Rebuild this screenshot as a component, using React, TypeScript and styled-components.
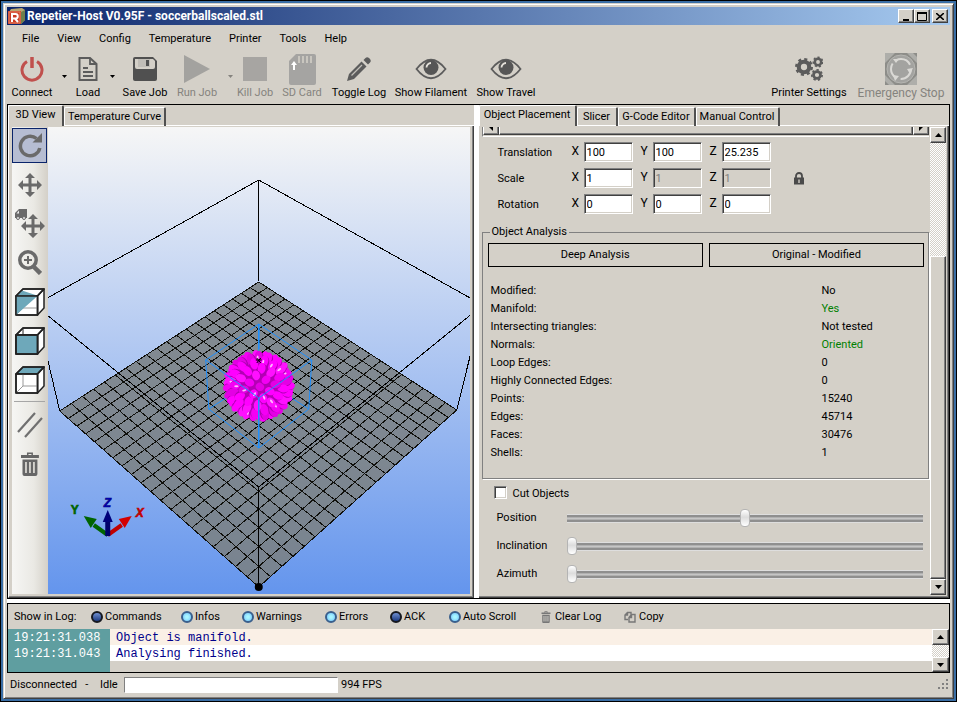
import React from 'react';
import styled, { createGlobalStyle, css } from 'styled-components';

const face = '#d4d0c8';
const uiFont = 'Roboto, "Liberation Sans", sans-serif';

const GlobalStyle = createGlobalStyle`
  * { box-sizing: border-box; }
  body { margin: 0; background: #000; font: 11px/14px ${uiFont}; color: #000; }
  button, input { font: inherit; color: inherit; margin: 0; }
  button { padding: 0; background: none; border: 0; }
  svg { display: block; flex: none; }
`;

const raised = css`
  background: ${face};
  border: 1px solid;
  border-color: #fff #404040 #404040 #fff;
  box-shadow: inset -1px -1px #808080;
`;

/* ---------- window ---------- */

const Desktop = styled.div`
  min-height: 100vh;
  display: flex;
  border: 1px solid #000;
  padding: 2px;
  background: #3a6ea5;
`;
const Frame = styled.div`
  flex: 1;
  min-width: 0;
  display: flex;
  flex-direction: column;
  padding: 3px;
  background: ${face};
  border: 1px solid;
  border-color: ${face} #404040 #404040 ${face};
  box-shadow: inset 1px 1px #fff, inset -1px -1px #808080;
`;
const TitleBar = styled.header`
  height: 18px;
  display: flex;
  align-items: center;
  padding: 0 2px 0 1px;
  background: linear-gradient(90deg, #0a246a, #a6caf0);
`;
const Title = styled.h1`
  flex: 1;
  margin: 0 0 0 2px;
  font-size: 12px;
  line-height: 18px;
  font-weight: 700;
  color: #fff;
  white-space: nowrap;
`;
const CaptionButton = styled.button<{ $apart?: boolean }>`
  ${raised}
  width: 16px;
  height: 14px;
  display: grid;
  place-items: center;
  margin-left: ${p => (p.$apart ? 2 : 0)}px;
`;
const MenuBar = styled.nav`
  height: 25px;
  display: flex;
  align-items: center;
  gap: 18px;
  padding: 2px 15px 0;
`;
const MenuItem = styled.button`
  white-space: nowrap;
  line-height: 23px;
`;

/* ---------- toolbar ---------- */

const Toolbar = styled.div`
  height: 54px;
  display: flex;
  padding-left: 1px;
`;
const Tool = styled.button<{ $w: number; $big?: boolean }>`
  flex: none;
  width: ${p => p.$w}px;
  display: flex;
  flex-direction: column;
  align-items: center;
  justify-content: flex-start;
  padding-top: 2px;
  white-space: nowrap;
  font-size: ${p => (p.$big ? 12 : 11)}px;
  &:disabled { color: #85837e; }
`;
const ToolIcon = styled.span`
  height: 34px;
  display: grid;
  place-items: center;
`;
const Drop = styled.button<{ $w: number }>`
  width: ${p => p.$w}px;
  display: flex;
  justify-content: center;
  padding-top: 25px;
  &:disabled { color: #85837e; }
`;
const Spacer = styled.div`
  flex: 1;
`;

/* ---------- work area ---------- */

const Main = styled.main`
  flex: 1 1 auto;
  display: flex;
  border: 1px solid #000;
`;
const Splitter = styled.div`
  flex: none;
  width: 5px;
  background: #fff;
`;
const Pane = styled.section<{ $grow: number }>`
  flex: ${p => p.$grow} 1 0;
  min-width: 0;
  display: flex;
  flex-direction: column;
`;
const TabStrip = styled.div`
  height: 21px;
  display: flex;
  align-items: flex-end;
`;
const Tab = styled.button<{ $w: number; $active?: boolean }>`
  width: ${p => p.$w}px;
  height: ${p => (p.$active ? 21 : 19)}px;
  padding-bottom: ${p => (p.$active ? 2 : 0)}px;
  border: 0 solid #fff;
  border-width: 1px 0 0 1px;
  border-right: 2px solid #505050;
  border-radius: 2px 2px 0 0;
  box-shadow: ${p => (p.$active ? 'none' : 'inset 0 -1px #fff')};
  white-space: nowrap;
`;
const TabRest = styled.div`
  flex: 1;
  border-bottom: 1px solid #fff;
`;
const TabPage = styled.div`
  flex: 1;
  min-height: 0;
  display: flex;
  padding: 1px 3px 3px;
  border-right: 1px solid #404040;
  border-bottom: 1px solid #404040;
  border-left: 1px solid #fff;
  box-shadow: inset -1px -1px #808080;
`;
const SideTools = styled.div`
  flex: none;
  width: 36px;
  padding-top: 1px;
  background: linear-gradient(90deg, #f6f6f4, #eae9e4 60%, #d4d0c8);
`;
const SideTool = styled.button<{ $on?: boolean }>`
  width: 35px;
  height: 35px;
  margin-bottom: 4px;
  display: grid;
  place-items: center;
  border: 1px solid ${p => (p.$on ? '#0a246a' : 'transparent')};
  background: ${p => (p.$on ? '#b6bdd2' : 'none')};
`;
const SideRule = styled.hr`
  margin: 2px 3px 5px 2px;
  border: 0;
  border-top: 1px solid #a6a6a6;
`;
const Canvas = styled.div`
  flex: 1;
  min-width: 0;
  background: linear-gradient(#f6f6f6, #6495ed);
  overflow: hidden;
`;

/* ---------- object placement ---------- */

const PlacementPage = styled.div`
  flex: 1;
  min-height: 0;
  display: flex;
  padding: 1px 2px 2px 3px;
  border-right: 1px solid #404040;
  border-bottom: 1px solid #404040;
  box-shadow: inset -1px -1px #808080;
`;
const Form = styled.div`
  flex: 1;
  min-width: 0;
  display: flex;
  flex-direction: column;
  padding-right: 1px;
`;
const HScroll = styled.div`
  height: 10px;
  display: flex;
  border-left: 1px solid #808080;
  border-bottom: 1px solid #fff;
`;
const HScrollPart = styled.div<{ $grow?: boolean }>`
  flex: ${p => (p.$grow ? '1' : '0 0 16px')};
  height: 8px;
  overflow: hidden;
  display: flex;
  justify-content: center;
  border: 1px solid;
  border-color: transparent #404040 #404040 #fff;
  border-top: 0;
  box-shadow: inset -1px -1px #808080;
`;
const Vectors = styled.div`
  display: grid;
  grid-template-columns: 74px repeat(3, 12px 57px) 1fr;
  grid-auto-rows: 20px;
  row-gap: 6px;
  align-items: center;
  padding: 5px 0 0 16px;
`;
const VectorName = styled.span`
  padding-top: 2px;
`;
const Axis = styled.label`
  padding-bottom: 2px;
  font-size: 12px;
`;
const NumberBox = styled.input`
  width: 49px;
  height: 20px;
  padding: 1px 2px 0;
  border: 1px solid;
  border-color: #808080 #fff #fff #808080;
  box-shadow: inset 1px 1px #404040, inset -1px -1px ${face};
  border-radius: 0;
  background: #fff;
  font-size: 11px;
  &:disabled { background: ${face}; color: #808080; }
`;
const Lock = styled.button`
  justify-self: start;
  margin-left: 15px;
`;
const Analysis = styled.fieldset`
  margin: 11px 0 0;
  min-width: 0;
  padding: 4px 4px 16px 5px;
  border: 1px solid #808080;
  box-shadow: 1px 1px #fff;
`;
const Legend = styled.legend`
  margin-left: 2px;
  padding: 0 2px;
`;
const ButtonRow = styled.div`
  display: grid;
  grid-template-columns: 1fr 1fr;
  gap: 6px;
  margin-bottom: 15px;
`;
const FlatButton = styled.button`
  height: 24px;
  border: 1px solid #000;
`;
const Facts = styled.dl`
  display: grid;
  grid-template-columns: 331px 1fr;
  line-height: 18px;
  margin: 0;
  padding-left: 3px;
`;
const Fact = styled.dt``;
const Value = styled.dd<{ $good?: boolean }>`
  margin: 0;
  color: ${p => (p.$good ? '#008000' : '#000')};
`;
const CutRow = styled.label`
  display: flex;
  align-items: center;
  gap: 6px;
  height: 18px;
  margin: 6px 0 0 12px;
`;
const Tick = styled.input`
  appearance: none;
  width: 13px;
  height: 13px;
  margin-bottom: 3px;
  border: 1px solid;
  border-color: #808080 #fff #fff #808080;
  box-shadow: inset 1px 1px #404040, inset -1px -1px ${face};
  background: #fff;
`;
const Sliders = styled.div`
  display: grid;
  grid-template-columns: 70px 1fr;
  grid-auto-rows: 28px;
  align-items: center;
  padding: 1px 6px 0 15px;
`;
const Range = styled.input`
  appearance: none;
  width: 100%;
  min-width: 0;
  height: 18px;
  background: linear-gradient(#dedede 0 1px, #8f8f8f 1px 3px, #b0b0b0 3px 4px, #c6c6c6 4px 5px, #b0b0b0 5px 6px, #8f8f8f 6px 8px, #dedede 8px) center / 100% 9px no-repeat;
  &::-webkit-slider-thumb {
    appearance: none;
    width: 10px;
    height: 18px;
    border: 1px solid #b4b4b4;
    border-radius: 4px;
    background: linear-gradient(#fff, #dcdcdc 45%, #fff);
  }
`;
const VScroll = styled.div<{ $w: number }>`
  flex: none;
  width: ${p => p.$w}px;
  display: flex;
  flex-direction: column;
  background: repeating-conic-gradient(#fff 0 25%, ${face} 0 50%) 0 0 / 2px 2px;
`;
const ScrollButton = styled.button<{ $h: number }>`
  ${raised}
  height: ${p => p.$h}px;
  display: grid;
  place-items: center;
`;
const ScrollGap = styled.div<{ $grow: number }>`
  flex: ${p => p.$grow} 1 0;
`;
const ScrollThumb = styled.div<{ $grow: number }>`
  ${raised}
  flex: ${p => p.$grow} 1 0;
`;

/* ---------- log ---------- */

const LogPanel = styled.section`
  margin-top: 4px;
  box-shadow: 0 -4px #fff;
  border: 1px solid #000;
  height: 70px;
  display: flex;
  flex-direction: column;
`;
const LogTools = styled.div`
  height: 25px;
  display: flex;
  align-items: center;
  padding-left: 6px;
`;
const LogCaption = styled.span`
  width: 77px;
  white-space: nowrap;
`;
const LogTool = styled.button<{ $w: number; $gap?: number }>`
  flex: none;
  width: ${p => p.$w}px;
  display: flex;
  align-items: center;
  gap: ${p => p.$gap ?? 2}px;
  white-space: nowrap;
`;
const Led = styled.span<{ $on?: boolean }>`
  width: 12px;
  height: 12px;
  border: 2px solid ${p => (p.$on ? '#3a5f8c' : '#15181f')};
  border-radius: 50%;
  background: ${p => (p.$on
    ? 'radial-gradient(circle, #a9f6ff 20%, #6fc0ff)'
    : 'linear-gradient(#6f8fd0, #1c3a80)')};
`;
const LogBody = styled.div`
  flex: 1;
  display: flex;
`;
const LogTable = styled.div`
  flex: 1;
  display: grid;
  grid-template-columns: 102px 1fr;
  grid-template-rows: 16px 16px 1fr;
  font: 12px/16px "Liberation Mono", monospace;
`;
const Stamp = styled.span`
  background: #5f9ea0;
  color: #fff;
  padding: 1px 0 0 6px;
`;
const Message = styled.span<{ $bg: string }>`
  background: ${p => p.$bg};
  color: #00008b;
  padding: 1px 0 0 6px;
`;
const StatusBar = styled.footer`
  height: 22px;
  display: flex;
  align-items: center;
  padding: 2px 0 0 3px;
`;
const StatusText = styled.span<{ $w: number }>`
  width: ${p => p.$w}px;
  white-space: pre;
`;
const Progress = styled.div`
  width: 214px;
  height: 16px;
  margin-right: 3px;
  background: #fff;
  border: 1px solid;
  border-color: #808080 #fff #fff #808080;
`;

/* ---------- icons ---------- */

const G = '#5c5c5c';
const Arrow = ({ up }: { up?: boolean }) => (
  <svg width="7" height="4" fill="currentColor"><path d={up ? 'M0 4L3.5 0L7 4z' : 'M0 0H7L3.5 4z'} /></svg>
);
const DropArrow = () => (
  <svg width="5" height="3" fill="currentColor"><path d="M0 0H5L2.5 3z" /></svg>
);
const AppIcon = () => (
  <svg width="17" height="16">
    <path d="M3 1L14 0L17 2V12L13 16V4H1z" fill="#b9a772" />
    <path d="M13 4L17 2V12L13 16z" fill="#6d7f4c" />
    <rect x="0" y="3" width="13" height="13" fill="#c93a22" />
    <rect x="1" y="4" width="11" height="11" fill="none" stroke="#e88868" />
    <path d="M4 14V6H7.500a2.200 2.200 0 0 1 0 4.500H4M7 10.500L10 14" fill="none" stroke="#fff" strokeWidth="2" />
  </svg>
);
const Power = () => (
  <svg width="24" height="26" fill="none" stroke="#c0504d" strokeWidth="3">
    <path d="M7 5.500A10 10 0 1 0 17 5.500" /><path d="M12 1V12" strokeWidth="3.500" />
  </svg>
);
const Doc = () => (
  <svg width="20" height="26" fill="none" stroke={G} strokeWidth="2">
    <path d="M1.500 2H12L18.500 8V24H1.500z" /><path d="M12 2V8H18M5 12H10M5 16H15M5 20H15" strokeWidth="1.800" />
  </svg>
);
const Floppy = () => (
  <svg width="24" height="24">
    <path d="M2 0H20L24 4V22a2 2 0 0 1-2 2H2a2 2 0 0 1-2-2V2a2 2 0 0 1 2-2z" fill="#505050" />
    <path d="M2 2H20L22 4V10a2 2 0 0 1-2 2H4a2 2 0 0 1-2-2z" fill="#d4d0c8" />
    <rect x="5" y="2" width="12" height="8" fill="#c0bdb7" /><rect x="13" y="3" width="3" height="6" fill="#505050" />
  </svg>
);
const Play = () => (<svg width="26" height="28" fill="#a3a29f"><path d="M0 0L26 14L0 28z" /></svg>);
const Stop = () => (<svg width="24" height="24"><rect width="24" height="24" fill="#a7a5a2" /></svg>);
const SdCard = () => (
  <svg width="27" height="31">
    <path d="M7 0H25a2 2 0 0 1 2 2V29a2 2 0 0 1-2 2H2a2 2 0 0 1-2-2V7z" fill="#a5a4a2" />
    <path d="M10 2V9M14 2V9M18 2V9M22 2V9" stroke="#c9c6bf" strokeWidth="2" />
    <path d="M5 16V9" stroke="#fff" strokeWidth="2" /><path d="M2 11L5 7L8 11z" fill="#fff" />
  </svg>
);
const Pencil = () => (
  <svg width="24" height="24" fill={G}>
    <path d="M0 24L2 17L14.500 4.500L19.500 9.500L7 22z" /><path d="M16.500 3L18.500 1Q20-.500 22 1L23 2Q24.500 4 23 5.500L21 7.500z" />
    <path d="M4.500 18.500L15 8" stroke="#c2bfb9" strokeWidth="1.200" />
  </svg>
);
const Eye = () => (
  <svg width="32" height="22">
    <path d="M1.500 11Q16-7.500 30.500 11Q16 29.500 1.500 11z" fill="none" stroke={G} strokeWidth="1.800" />
    <circle cx="16" cy="9.500" r="7.500" fill="#565656" />
    <path d="M11.500 9.500A4.500 4.500 0 0 1 16 5" fill="none" stroke="#e4e1da" strokeWidth="1.800" />
  </svg>
);
const gear = (cx: number, cy: number, r: number, t: number) => (
  <g stroke={G} fill="none">
    <circle cx={cx} cy={cy} r={r * 0.58} strokeWidth={r * 0.46} />
    <circle cx={cx} cy={cy} r={r * 0.86} strokeWidth={r * 0.28} strokeDasharray={`${(r * 0.86 * Math.PI) / t} ${(r * 0.86 * Math.PI) / t}`} />
  </g>
);
const Gears = () => (<svg width="28" height="26">{gear(9, 11, 9, 8)}{gear(23, 6, 5.5, 7)}{gear(22, 19, 6, 7)}</svg>);
const Emergency = () => (
  <svg width="32" height="32">
    <rect width="32" height="32" fill="#8d8d89" />
    <path d="M0 10L10 0H0zM22 0L32 10V4L28 0zM0 22L10 32H4L0 28zM32 22L22 32H32z" fill="#aeaeaa" />
    <circle cx="16" cy="16" r="14" fill="#a3a3a0" stroke="#b5b5b1" />
    <circle cx="16" cy="16" r="10" fill="none" stroke="#dad9d5" strokeWidth="2" strokeDasharray="16 5" />
    <path d="M8 6H14L11 10zM28 15L25 21L22 16zM8 22L14 23L10 28z" fill="#dad9d5" />
  </svg>
);
const Rotate = () => (
  <svg width="24" height="25" fill="none" stroke="#6a6a6a" strokeWidth="3.500">
    <path d="M18.500 5.500A9.800 9.800 0 1 0 21.800 15" /><path d="M24 0V9.500H14.500z" fill="#6a6a6a" stroke="none" />
  </svg>
);
const crossPath = 'M12 0L17 5H13.500V10.500H19V7L24 12L19 17V13.500H13.500V19H17L12 24L7 19H10.500V13.500H5V17L0 12L5 7V10.500H10.500V5H7z';
const Move = () => (<svg width="24" height="24" fill="#6a6a6a"><path d={crossPath} /></svg>);
const MoveObject = () => (
  <svg width="30" height="29" fill="#6a6a6a">
    <path d={crossPath} transform="translate(6 5)" />
    <path d="M4 0H12V9H0V4z" /><path d="M1.500 4.500L4 1.500V4.500z" fill="#eee" />
    <circle cx="3" cy="9" r="1.500" fill="#eee" stroke="#6a6a6a" /><circle cx="9" cy="9" r="1.500" fill="#eee" stroke="#6a6a6a" />
  </svg>
);
const ZoomIcon = () => (
  <svg width="24" height="25" fill="none" stroke="#6a6a6a">
    <circle cx="10" cy="10" r="8.200" strokeWidth="3.500" /><path d="M16 17L22.500 23.500" strokeWidth="4.500" />
    <path d="M10 6V14M6 10H14" strokeWidth="2" />
  </svg>
);
const Cube = ({ kind }: { kind: 'half' | 'front' | 'top' }) => (
  <svg width="30" height="28" stroke="#222" strokeWidth="1.500" strokeLinejoin="round">
    <path d="M1 8L8 1H29L22.500 8z" fill={kind === 'top' ? '#6ea8ba' : '#fff'} />
    <path d="M22.500 8L29 1V20L22.500 27z" fill="#fff" /><rect x="1" y="8" width="21.500" height="19" fill="#fff" />
    {kind !== 'front' && <path d="M8 8V20L1 27M8 20H22" fill="none" stroke="#999" strokeWidth="1" />}
    {kind === 'half' && <path d="M1 8H22.500L1 27zM7 2.500L22 7.500H2z" fill="#6ea8ba" stroke="none" />}
    {kind === 'front' && <rect x="1" y="8" width="21.500" height="19" fill="#6ea8ba" />}
    {kind === 'front' && <path d="M8 1V7" strokeWidth="1" />}
    <path d="M1 8H22.500V27H1zM1 8L8 1H29L22.500 8" fill="none" />
  </svg>
);
const Parallel = () => (
  <svg width="26" height="26" stroke="#707070" strokeWidth="2.200"><path d="M1 20L18 1M8 25L25 6" /></svg>
);
const Trash = ({ size = 24, color = '#666' }: { size?: number; color?: string }) => (
  <svg width={size * 0.83} height={size} viewBox="0 0 20 24" fill={color}>
    <path d="M7 3V0.500H13V3H19V6H1V3zM8.500 3H11.500V2H8.500zM2.500 7.500H17.500V22Q17.500 24 15.500 24H4.500Q2.500 24 2.500 22z" />
    <path d="M6 10V21M10 10V21M14 10V21" stroke="#d8d6d0" strokeWidth="1.800" />
  </svg>
);
const CopyIcon = () => (
  <svg width="12" height="12" fill="none" stroke="#777" strokeWidth="1.400">
    <path d="M4 8.500H1V4L3.500 1.500H7V4M3.500 1.500V4H1M5 6.500L7.500 3.500H11V11H5zM7.500 3.500V6.500H5" />
  </svg>
);
const LockIcon = () => (
  <svg width="10" height="13">
    <path d="M2 6V4a3 3 0 0 1 6 0V6" fill="none" stroke="#4a4a4a" strokeWidth="1.800" />
    <rect x="0" y="5.500" width="10" height="7" fill="#4a4a4a" /><path d="M5 7.500V11" stroke="#c8c5be" strokeWidth="1.500" />
  </svg>
);

/* ---------- 3D scene ---------- */

type Pt = [number, number];
const back: Pt = [211, 155];
const right: Pt = [409, 283];
const front: Pt = [211, 460];
const left: Pt = [12, 284];

// Maps the unit square of the print bed onto its projected corners.
const bed = (() => {
  const dx1 = right[0] - front[0], dx2 = left[0] - front[0], dx3 = back[0] - right[0] + front[0] - left[0];
  const dy1 = right[1] - front[1], dy2 = left[1] - front[1], dy3 = back[1] - right[1] + front[1] - left[1];
  const det = dx1 * dy2 - dx2 * dy1;
  const g = (dx3 * dy2 - dx2 * dy3) / det;
  const h = (dx1 * dy3 - dx3 * dy1) / det;
  const a = right[0] - back[0] + g * right[0], b = left[0] - back[0] + h * left[0];
  const d = right[1] - back[1] + g * right[1], e = left[1] - back[1] + h * left[1];
  return (u: number, v: number) => {
    const w = g * u + h * v + 1;
    return `${((a * u + b * v + back[0]) / w).toFixed(1)} ${((d * u + e * v + back[1]) / w).toFixed(1)}`;
  };
})();
const gridPath = Array.from({ length: 21 }, (_, i) => i / 20)
  .map(t => `M${bed(t, 0)}L${bed(t, 1)}M${bed(0, t)}L${bed(1, t)}`)
  .join('');

// Blunt spikes spread evenly over a sphere, nearest ones drawn last.
const spikes = Array.from({ length: 110 }, (_, i) => {
  const y = 1 - (i + 0.5) / 55;
  const ring = Math.sqrt(1 - y * y);
  const t = i * 2.39996;
  const x = ring * Math.cos(t);
  const z = ring * Math.sin(t);
  return { x, y, z, a: (Math.atan2(y, x) * 180) / Math.PI, r: Math.hypot(x, y), i };
}).filter(p => p.z > -0.4).sort((p, q) => p.z - q.z);
const shades = ['#ff00ff', '#f400f4', '#ff00ff', '#e400e4', '#ff10ff'];

const Scene = () => (
  <svg width="100%" height="100%" viewBox="0 0 422 467" preserveAspectRatio="xMidYMid slice">
    <path d={`M${back}L${right}L${front}L${left}z`} fill="#7b8183" fillOpacity="0.88" />
    <path d={gridPath} fill="none" stroke="#10100c" strokeWidth="1" shapeRendering="crispEdges" />
    <path
      d="M211 53L-13 178L12 284M211 53L435 178L409 283M211 53V154M-13 178L211 360L435 178M211 360V460"
      fill="none" stroke="#000" shapeRendering="crispEdges"
    />
    <path d="M211 197L158 233L161 282L211 321L261 282L264 233zM161 282L211 250L261 282M211 197V250" fill="none" stroke="#1e90ff" />
    <circle cx="211" cy="259" r="27" fill="#b400b4" />
    {spikes.map(p => (
      <g key={p.i} transform={`translate(${(211 + p.x * 30).toFixed(1)} ${(259 + p.y * 30).toFixed(1)}) rotate(${p.a.toFixed(0)})`}>
        <ellipse cx={-p.r} cy="0.800" rx={4.4 + p.r * 2} ry="4.300" fill="#b000b4" />
        <ellipse rx={4.2 + p.r * 2} ry="3.900" fill={shades[p.i % 5]} />
        {p.i % 4 === 0 && <ellipse cx={-p.r} cy="-1" rx="2.200" ry="1" fill="#ffb8ff" />}
      </g>
    ))}
    <path d="M209 231L213 236M213 231L209 236M208 233H214" stroke="#000" />
    <path d="M158 233L211 271L264 233" fill="none" stroke="#1e90ff" strokeWidth="1" />
    <path d="M211 271V321M211 197V222" stroke="#1e90ff" strokeWidth="1.500" />
    <circle cx="211" cy="460" r="4" />
    <g strokeWidth="4">
      <path d="M60 408L46 398" stroke="#006400" /><path d="M36 389L49 392L43 401z" fill="#006400" />
      <path d="M60 408L74 398" stroke="#c00000" /><path d="M84 389L71 392L77 401z" fill="#d40000" />
      <path d="M60 409V394" stroke="#00006a" strokeWidth="5" /><path d="M60 383L65 395H55z" fill="#00007a" />
    </g>
    <g fontFamily="Liberation Sans, sans-serif" fontSize="12" fontWeight="700" strokeWidth="0.600">
      <text x="23" y="387" fill="#006400" stroke="#006400">Y</text>
      <text x="56" y="380" fill="#0000c0" stroke="#00007a" fontStyle="italic">Z</text>
      <text x="88" y="390" fill="#c00000" stroke="#c00000" fontStyle="italic">X</text>
    </g>
  </svg>
);

/* ---------- data ---------- */

const facts: [string, string, boolean?][] = [
  ['Modified:', 'No'],
  ['Manifold:', 'Yes', true],
  ['Intersecting triangles:', 'Not tested'],
  ['Normals:', 'Oriented', true],
  ['Loop Edges:', '0'],
  ['Highly Connected Edges:', '0'],
  ['Points:', '15240'],
  ['Edges:', '45714'],
  ['Faces:', '30476'],
  ['Shells:', '1'],
];
const vectors: { name: string; values: string[]; locked?: boolean }[] = [
  { name: 'Translation', values: ['100', '100', '25.235'] },
  { name: 'Scale', values: ['1', '1', '1'], locked: true },
  { name: 'Rotation', values: ['0', '0', '0'] },
];
const logFilters: [string, number, boolean][] = [
  ['Commands', 90, false],
  ['Infos', 61, true],
  ['Warnings', 83, true],
  ['Errors', 65, true],
  ['ACK', 59, false],
  ['Auto Scroll', 92, true],
];

export default function App() {
  return (
    <Desktop>
      <GlobalStyle />
      <Frame>
        <TitleBar>
          <AppIcon />
          <Title>Repetier-Host V0.95F - soccerballscaled.stl</Title>
          <CaptionButton aria-label="Minimize"><svg width="10" height="9"><path d="M2 8H8" stroke="#000" strokeWidth="2" /></svg></CaptionButton>
          <CaptionButton aria-label="Maximize"><svg width="10" height="9"><path d="M.500 1H9.500M.500 1V8.500H9.500V1" fill="none" stroke="#000" /><path d="M0 1H10" stroke="#000" strokeWidth="2" /></svg></CaptionButton>
          <CaptionButton aria-label="Close" $apart><svg width="8" height="7"><path d="M0 0L8 7M8 0L0 7" stroke="#000" strokeWidth="1.600" /></svg></CaptionButton>
        </TitleBar>
        <MenuBar>
          {['File', 'View', 'Config', 'Temperature', 'Printer', 'Tools', 'Help'].map(m => <MenuItem key={m}>{m}</MenuItem>)}
        </MenuBar>
        <Toolbar>
          <Tool $w={48}><ToolIcon><Power /></ToolIcon>Connect</Tool>
          <Drop $w={16} aria-label="Connect options"><DropArrow /></Drop>
          <Tool $w={32}><ToolIcon><Doc /></ToolIcon>Load</Tool>
          <Drop $w={16} aria-label="Load options"><DropArrow /></Drop>
          <Tool $w={50}><ToolIcon><Floppy /></ToolIcon>Save Job</Tool>
          <Tool $w={54} disabled><ToolIcon><Play /></ToolIcon>Run Job</Tool>
          <Drop $w={12} disabled aria-label="Run options"><DropArrow /></Drop>
          <Tool $w={38} disabled><ToolIcon><Stop /></ToolIcon>Kill Job</Tool>
          <Tool $w={56} disabled><ToolIcon><SdCard /></ToolIcon>SD Card</Tool>
          <Tool $w={58}><ToolIcon><Pencil /></ToolIcon>Toggle Log</Tool>
          <Tool $w={86}><ToolIcon><Eye /></ToolIcon>Show Filament</Tool>
          <Tool $w={64}><ToolIcon><Eye /></ToolIcon>Show Travel</Tool>
          <Spacer />
          <Tool $w={86}><ToolIcon><Gears /></ToolIcon>Printer Settings</Tool>
          <Tool $w={98} $big disabled><ToolIcon><Emergency /></ToolIcon>Emergency Stop</Tool>
        </Toolbar>

        <Main>
          <Pane $grow={466}>
            <TabStrip role="tablist">
              <Tab role="tab" $w={56} $active>3D View</Tab>
              <Tab role="tab" $w={102}>Temperature Curve</Tab>
              <TabRest />
            </TabStrip>
            <TabPage>
              <SideTools>
                <SideTool $on aria-label="Rotate"><Rotate /></SideTool>
                <SideTool aria-label="Move viewpoint"><Move /></SideTool>
                <SideTool aria-label="Move object"><MoveObject /></SideTool>
                <SideTool aria-label="Zoom"><ZoomIcon /></SideTool>
                <SideTool aria-label="Isometric view"><Cube kind="half" /></SideTool>
                <SideTool aria-label="Front view"><Cube kind="front" /></SideTool>
                <SideTool aria-label="Top view"><Cube kind="top" /></SideTool>
                <SideRule />
                <SideTool aria-label="Parallel projection"><Parallel /></SideTool>
                <SideTool aria-label="Delete object"><Trash /></SideTool>
              </SideTools>
              <Canvas><Scene /></Canvas>
            </TabPage>
          </Pane>
          <Splitter />
          <Pane $grow={471}>
            <TabStrip role="tablist">
              <Tab role="tab" $w={98} $active>Object Placement</Tab>
              <Tab role="tab" $w={41}>Slicer</Tab>
              <Tab role="tab" $w={78}>G-Code Editor</Tab>
              <Tab role="tab" $w={84}>Manual Control</Tab>
              <TabRest />
            </TabStrip>
            <PlacementPage>
              <Form>
                <HScroll>
                  <HScrollPart><svg width="4" height="4"><path d="M0 0H4V4z" /></svg></HScrollPart>
                  <HScrollPart $grow />
                  <HScrollPart><svg width="4" height="4"><path d="M0 0H4L0 4z" /></svg></HScrollPart>
                </HScroll>
                <Vectors>
                  {vectors.map(v => (
                    <React.Fragment key={v.name}>
                      <VectorName>{v.name}</VectorName>
                      {['X', 'Y', 'Z'].map((axis, i) => (
                        <React.Fragment key={axis}>
                          <Axis htmlFor={v.name + axis}>{axis}</Axis>
                          <NumberBox id={v.name + axis} defaultValue={v.values[i]} disabled={v.locked && i > 0} />
                        </React.Fragment>
                      ))}
                      {v.locked ? <Lock aria-label="Lock aspect ratio"><LockIcon /></Lock> : <span />}
                    </React.Fragment>
                  ))}
                </Vectors>
                <Analysis>
                  <Legend>Object Analysis</Legend>
                  <ButtonRow>
                    <FlatButton>Deep Analysis</FlatButton>
                    <FlatButton>Original - Modified</FlatButton>
                  </ButtonRow>
                  <Facts>
                    {facts.map(([k, v, good]) => (
                      <React.Fragment key={k}><Fact>{k}</Fact><Value $good={good}>{v}</Value></React.Fragment>
                    ))}
                  </Facts>
                </Analysis>
                <CutRow><Tick type="checkbox" />Cut Objects</CutRow>
                <Sliders>
                  <label htmlFor="position">Position</label><Range id="position" type="range" defaultValue={50} />
                  <label htmlFor="inclination">Inclination</label><Range id="inclination" type="range" defaultValue={0} />
                  <label htmlFor="azimuth">Azimuth</label><Range id="azimuth" type="range" defaultValue={0} />
                </Sliders>
              </Form>
              <VScroll $w={16}>
                <ScrollButton $h={16} aria-label="Scroll up"><Arrow up /></ScrollButton>
                <ScrollGap $grow={113} />
                <ScrollThumb $grow={321} />
                <ScrollButton $h={16} aria-label="Scroll down"><Arrow /></ScrollButton>
              </VScroll>
            </PlacementPage>
          </Pane>
        </Main>

        <LogPanel>
          <LogTools>
            <LogCaption>Show in Log:</LogCaption>
            {logFilters.map(([name, w, on]) => (
              <LogTool key={name} $w={w} aria-pressed={on}><Led $on={on} />{name}</LogTool>
            ))}
            <LogTool $w={83} $gap={4}><Trash size={12} color="#777" />Clear Log</LogTool>
            <LogTool $w={50} $gap={3}><CopyIcon />Copy</LogTool>
          </LogTools>
          <LogBody>
            <LogTable>
              <Stamp>19:21:31.038</Stamp><Message $bg="#faf0e6">Object is manifold.</Message>
              <Stamp>19:21:31.043</Stamp><Message $bg="#fff">Analysing finished.</Message>
              <Stamp /><Message $bg={face} />
            </LogTable>
            <VScroll $w={17}>
              <ScrollButton $h={16} aria-label="Scroll log up"><Arrow up /></ScrollButton>
              <ScrollGap $grow={1} />
              <ScrollButton $h={15} aria-label="Scroll log down"><Arrow /></ScrollButton>
            </VScroll>
          </LogBody>
        </LogPanel>
        <StatusBar>
          <StatusText $w={90}>Disconnected   -</StatusText>
          <StatusText $w={24}>Idle</StatusText>
          <Progress role="progressbar" aria-label="Job progress" />
          994 FPS
          <Spacer />
          <svg width="12" height="12"><path d="M8 0h2v2h-2zM4 4h2v2h-2zM8 4h2v2h-2zM0 8h2v2h-2zM4 8h2v2h-2zM8 8h2v2h-2z" fill="#808080" /></svg>
        </StatusBar>
      </Frame>
    </Desktop>
  );
}
